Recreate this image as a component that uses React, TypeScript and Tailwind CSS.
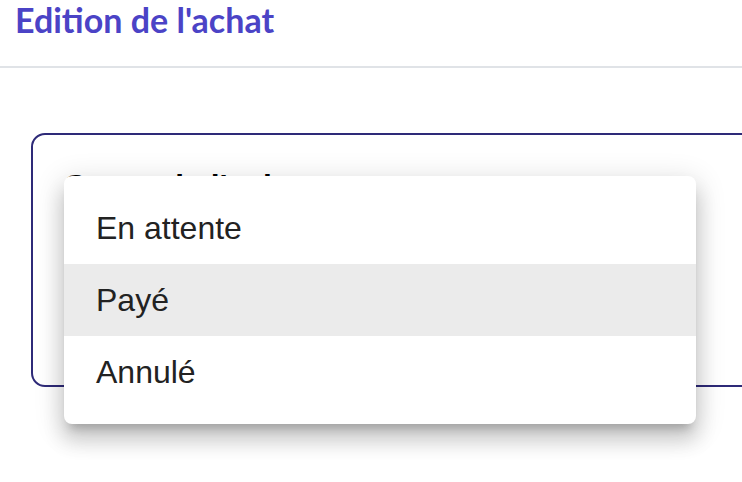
const statuses = ["En attente", "Payé", "Annulé"];

function StatusMenu({ selected }: { selected: string }) {
  return (
    <ul className="absolute left-[64px] top-[176px] w-[632px] rounded-lg bg-white py-4 shadow-[0px_10px_10px_-6px_rgba(0,0,0,0.2),0px_16px_20px_2px_rgba(0,0,0,0.14),0px_6px_28px_4px_rgba(0,0,0,0.12)]">
      {statuses.map((s) => (
        <li
          key={s}
          className={`flex h-[72px] items-center px-8 text-[32px] text-[#222222] ${s === selected ? "bg-[#ebebeb]" : ""}`}
        >
          {s}
        </li>
      ))}
    </ul>
  );
}

export default function App() {
  return (
    <div className="relative h-[482px] w-[742px] overflow-hidden bg-white font-['Liberation_Sans',Arial,sans-serif]">
      <header className="h-[68px] border-b-2 border-[#e0e3e7] px-[15px]">
        <h1 className="font-['Lato',sans-serif] text-[34px] font-bold leading-[40px] text-[#4b43c6]">
          Edition de l'achat
        </h1>
      </header>

      <section className="ml-[31px] mt-[65px] h-[254px] w-[800px] rounded-[14px] border-2 border-[#2e2a78] px-8 pt-[27px]">
        <p className="text-[32px] font-bold text-black">Statut de l'achat</p>
      </section>

      <StatusMenu selected="Payé" />
    </div>
  );
}
